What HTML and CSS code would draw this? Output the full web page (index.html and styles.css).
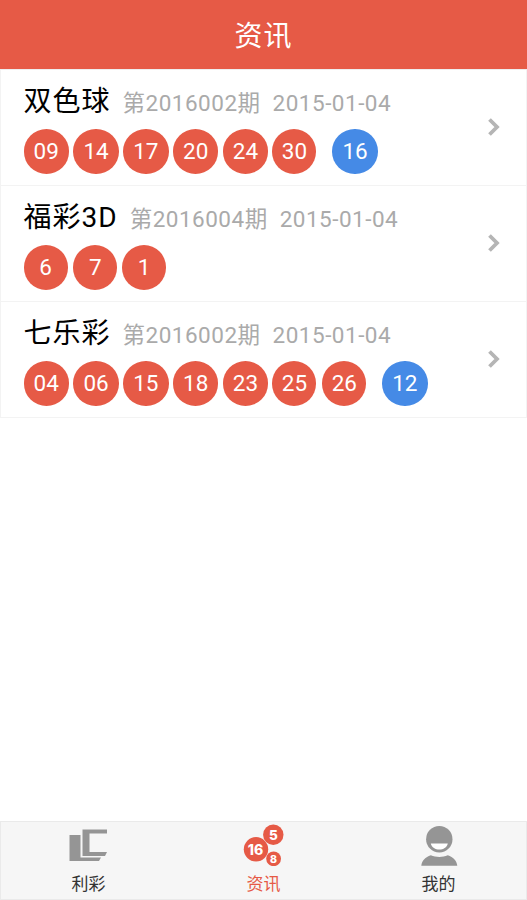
FILE: index.html
```
<!DOCTYPE html>
<html lang="zh-CN">
<head>
<meta charset="utf-8">
<title>资讯</title>
<link rel="stylesheet" href="styles.css">
</head>
<body>
<header class="header"><h1>资讯</h1></header>
<main class="list">
  <a class="row">
    <div class="info">
      <div class="heading"><span class="name">双色球</span><span class="issue">第2016002期</span><span class="date">2015-01-04</span></div>
      <div class="balls"><span class="ball">09</span><span class="ball">14</span><span class="ball">17</span><span class="ball">20</span><span class="ball">24</span><span class="ball narrow">30</span><span class="ball blue">16</span></div>
    </div>
    <svg class="arrow" width="14" height="20" viewBox="0 0 14 20"><path d="M2.500 2.500L10 10l-7.500 7.500" fill="none" stroke="#b5b5b5" stroke-width="3.800"/></svg>
  </a>
  <a class="row">
    <div class="info">
      <div class="heading"><span class="name">福彩3D</span><span class="issue">第2016004期</span><span class="date">2015-01-04</span></div>
      <div class="balls"><span class="ball narrow">6</span><span class="ball narrow">7</span><span class="ball narrow shift">1</span></div>
    </div>
    <svg class="arrow" width="14" height="20" viewBox="0 0 14 20"><path d="M2.500 2.500L10 10l-7.500 7.500" fill="none" stroke="#b5b5b5" stroke-width="3.800"/></svg>
  </a>
  <a class="row">
    <div class="info">
      <div class="heading"><span class="name">七乐彩</span><span class="issue">第2016002期</span><span class="date">2015-01-04</span></div>
      <div class="balls"><span class="ball">04</span><span class="ball">06</span><span class="ball">15</span><span class="ball">18</span><span class="ball">23</span><span class="ball narrow">25</span><span class="ball narrow">26</span><span class="ball blue">12</span></div>
    </div>
    <svg class="arrow" width="14" height="20" viewBox="0 0 14 20"><path d="M2.500 2.500L10 10l-7.500 7.500" fill="none" stroke="#b5b5b5" stroke-width="3.800"/></svg>
  </a>
</main>
<nav class="tabs">
  <a class="tab">
    <svg width="44" height="44" viewBox="0 0 44 44" fill="#959595"><path d="M2.500 13H13.500v22.500H34L32 39H2.500z"/><path d="M15.500 7.500H40v4H22.500V30H40l-2 4H15.500z"/></svg>
    <span>利彩</span>
  </a>
  <a class="tab active">
    <svg width="44" height="44" viewBox="0 0 44 44"><g fill="#e65a46"><circle cx="14" cy="27.300" r="12.200"/><circle cx="31.300" cy="12.800" r="10.200"/><circle cx="31.600" cy="36.800" r="7.400"/></g><g class="digits" fill="#fff"><text x="13.500" y="32.500" font-size="14">16</text><text x="31.300" y="17.500" font-size="13.500">5</text><text x="31.600" y="40.500" font-size="10.500">8</text></g></svg>
    <span>资讯</span>
  </a>
  <a class="tab">
    <svg width="44" height="44" viewBox="0 0 44 44" fill="#959595"><circle cx="22.300" cy="17.200" r="13.200"/><path d="M13.800 21.500h17c-1 4-4.500 6-8.500 6s-7.500-2-8.500-6z" fill="#fff"/><path d="M4.300 43.800c.8-5.500 4-8.500 9.500-10.500 5.500 2.300 11.500 2.300 17 0 5.500 2 8.700 5 9.500 10.500z"/></svg>
    <span>我的</span>
  </a>
</nav>
</body>
</html>
```
FILE: styles.css
```
* { box-sizing: border-box; }
body {
  margin: 0;
  height: 900px;
  display: flex;
  flex-direction: column;
  background: #fff;
  font-family: Roboto, "Noto Sans CJK SC", sans-serif;
}
.header {
  height: 69px;
  display: flex;
  align-items: center;
  justify-content: center;
  background: #e65a46;
  color: #fff;
}
.header h1 {
  margin: 0;
  padding-top: 5px;
  font-size: 28px;
  line-height: 40px;
  font-weight: 400;
  letter-spacing: 1px;
}
.list {
  flex: 1;
  border-top: 1px solid #eee;
}
.row {
  height: 116px;
  display: flex;
  align-items: center;
  justify-content: space-between;
  padding: 0 25px 0 22.5px;
  border: 1px solid #f3f3f3;
  border-top: 0;
}
.info { height: 115px; padding-top: 12px; }
.heading {
  display: flex;
  align-items: baseline;
  height: 47px;
  line-height: 40px;
  white-space: nowrap;
}
.name { font-size: 28px; letter-spacing: 1px; color: #000; margin-right: 12px; }
.issue, .date { font-size: 22.5px; letter-spacing: .5px; color: #aaa; }
.issue { margin-right: 12px; }
.balls { display: flex; gap: 4.3px; }
.ball {
  width: 45.5px;
  height: 44.5px;
  border-radius: 50%;
  background: #e65a46;
  color: #fff;
  font-size: 22.5px;
  line-height: 45px;
  text-align: center;
}
.narrow { width: 44px; margin-right: 1.5px; }
.shift { margin-left: -1px; }
.blue { background: #458ae6; margin-left: 10px; }
.arrow { flex: none; margin-bottom: 2px; }
.tabs {
  height: 79px;
  display: flex;
  background: #f6f6f6;
  border: 1px solid #eaeaea;
}
.tab {
  flex: 1;
  display: flex;
  flex-direction: column;
  align-items: center;
  font-size: 17px;
  line-height: 24px;
  color: #333;
}
.tab span { margin-top: 6px; }
.tab.active { color: #e65a46; }
.digits { font-family: Inter, sans-serif; font-weight: 800; text-anchor: middle; }
```
